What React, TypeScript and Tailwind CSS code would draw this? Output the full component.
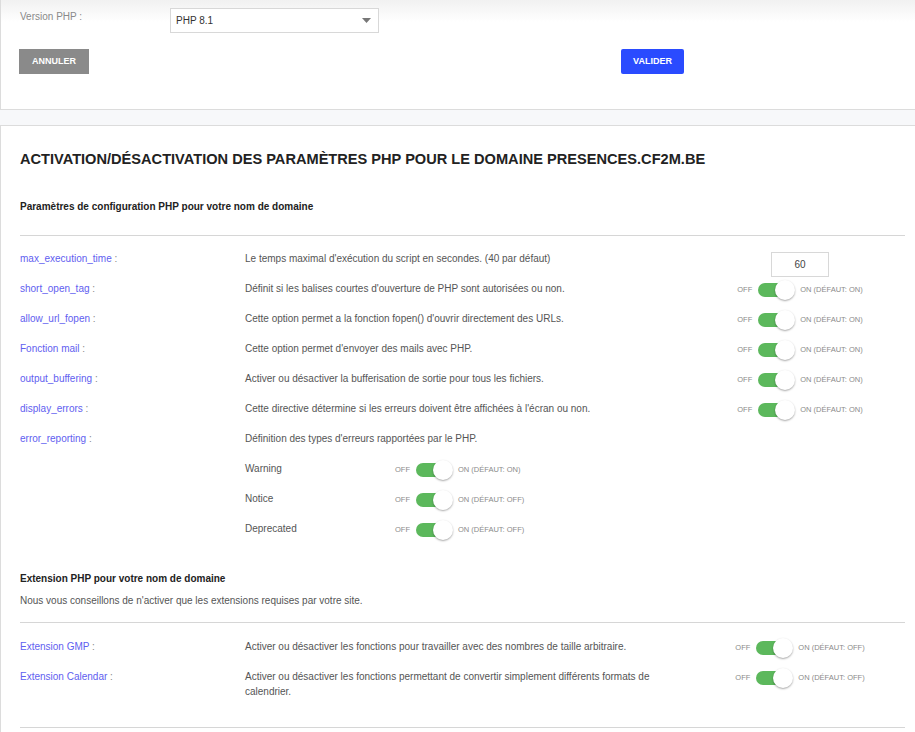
const params = [
  { name: "short_open_tag", desc: "Définit si les balises courtes d'ouverture de PHP sont autorisées ou non.", def: "ON" },
  { name: "allow_url_fopen", desc: "Cette option permet a la fonction fopen() d'ouvrir directement des URLs.", def: "ON" },
  { name: "Fonction mail", desc: "Cette option permet d'envoyer des mails avec PHP.", def: "ON" },
  { name: "output_buffering", desc: "Activer ou désactiver la bufferisation de sortie pour tous les fichiers.", def: "ON" },
  { name: "display_errors", desc: "Cette directive détermine si les erreurs doivent être affichées à l'écran ou non.", def: "ON" },
];

const errorTypes = [
  { name: "Warning", def: "ON" },
  { name: "Notice", def: "OFF" },
  { name: "Deprecated", def: "OFF" },
];

const extensions = [
  { name: "Extension GMP", desc: "Activer ou désactiver les fonctions pour travailler avec des nombres de taille arbitraire.", def: "OFF" },
  { name: "Extension Calendar", desc: "Activer ou désactiver les fonctions permettant de convertir simplement différents formats de calendrier.", def: "OFF" },
];

function Toggle({ def }: { def: string }) {
  return (
    <div className="flex items-center mt-[1px]">
      <span className="text-[7.5px] text-[#8a8a8a] mr-[6px]">OFF</span>
      <div className="relative w-[34px] h-[14px] rounded-full bg-[#5cb85c]">
        <div className="absolute right-[-3px] top-[-3px] w-[20px] h-[20px] rounded-full bg-white shadow-[0_1px_2px_rgba(0,0,0,0.35)]" />
      </div>
      <span className="text-[7.5px] text-[#8a8a8a] ml-[8px]">ON (DÉFAUT: {def})</span>
    </div>
  );
}

function Label({ name }: { name: string }) {
  return (
    <div className="text-[10px]">
      <span className="text-[#5f60f0]">{name}</span>
      <span className="text-[#888]"> :</span>
    </div>
  );
}

export default function App() {
  return (
    <div className="min-h-[732px] bg-[#f7f8fa] font-['Liberation_Sans',Arial,sans-serif] leading-[15px] overflow-hidden">
      {/* version form */}
      <div className="bg-[linear-gradient(to_bottom,#f1f1f1,#ffffff_22px)] border-l border-b border-[#dcdcdc] h-[110px] pl-[18px] pt-[8px]">
        <div className="flex items-start">
          <div className="w-[151px] text-[10px] text-[#8a8a8a] pt-[1px] pl-[1px]">Version PHP :</div>
          <div className="w-[209px] h-[25px] border border-[#d8d8d8] bg-white flex items-center justify-between pl-[5px] pr-[7px]">
            <span className="text-[10px] text-[#333]">PHP 8.1</span>
            <svg width="9" height="5" viewBox="0 0 9 5"><path d="M0 0h9L4.5 5z" fill="#777" /></svg>
          </div>
        </div>
        <div className="grid grid-cols-[602px_auto] mt-[16px]">
          <div>
            <button className="w-[70px] h-[25px] bg-[#8a8a8a] text-white text-[9px] font-bold">ANNULER</button>
          </div>
          <div>
            <button className="w-[63px] h-[25px] bg-[#2a4bff] text-white text-[9px] font-bold rounded-[2px]">VALIDER</button>
          </div>
        </div>
      </div>

      {/* settings card */}
      <div className="mt-[15px] bg-white border-l border-t border-[#dcdcdc] pl-[19px] pr-[10px] pt-[24px] pb-[10px]">
        <h2 className="text-[14.6px] font-bold text-[#222] leading-[18px]">
          ACTIVATION/DÉSACTIVATION DES PARAMÈTRES PHP POUR LE DOMAINE PRESENCES.CF2M.BE
        </h2>
        <h3 className="text-[10px] font-bold text-[#222] mt-[31px]">Paramètres de configuration PHP pour votre nom de domaine</h3>
        <div className="border-t border-[#d6d6d6] mt-[21px]" />

        <div className="pt-[15px]">
          <div className="grid grid-cols-[225px_450px_1fr] h-[30px] items-start">
            <Label name="max_execution_time" />
            <div className="text-[10px] text-[#555]">Le temps maximal d'exécution du script en secondes. (40 par défaut)</div>
            <div className="flex justify-center">
              <div className="w-[58px] h-[25px] border border-[#d8d8d8] flex items-center justify-center text-[10px] text-[#444] mt-[1px]">60</div>
            </div>
          </div>
          {params.map((p) => (
            <div key={p.name} className="grid grid-cols-[225px_450px_1fr] h-[30px] items-start">
              <Label name={p.name} />
              <div className="text-[10px] text-[#555]">{p.desc}</div>
              <div className="flex justify-center">
                <Toggle def={p.def} />
              </div>
            </div>
          ))}
          <div className="grid grid-cols-[225px_1fr] items-start">
            <Label name="error_reporting" />
            <div>
              <div className="text-[10px] text-[#555] h-[30px]">Définition des types d'erreurs rapportées par le PHP.</div>
              {errorTypes.map((e) => (
                <div key={e.name} className="grid grid-cols-[150px_auto] h-[30px] items-start">
                  <div className="text-[10px] text-[#555]">{e.name}</div>
                  <div className="flex">
                    <Toggle def={e.def} />
                  </div>
                </div>
              ))}
            </div>
          </div>
        </div>

        <h3 className="text-[10px] font-bold text-[#222] mt-[20px]">Extension PHP pour votre nom de domaine</h3>
        <p className="text-[10px] text-[#555] mt-[7px]">Nous vous conseillons de n'activer que les extensions requises par votre site.</p>
        <div className="border-t border-[#d6d6d6] mt-[14px]" />

        <div className="pt-[16px]">
          {extensions.map((x) => (
            <div key={x.name} className="grid grid-cols-[225px_450px_1fr] min-h-[30px] items-start">
              <Label name={x.name} />
              <div className="text-[10px] text-[#555] pr-[10px]">{x.desc}</div>
              <div className="flex justify-center">
                <Toggle def={x.def} />
              </div>
            </div>
          ))}
        </div>
        <div className="border-t border-[#d6d6d6] mt-[28px]" />
      </div>
    </div>
  );
}
